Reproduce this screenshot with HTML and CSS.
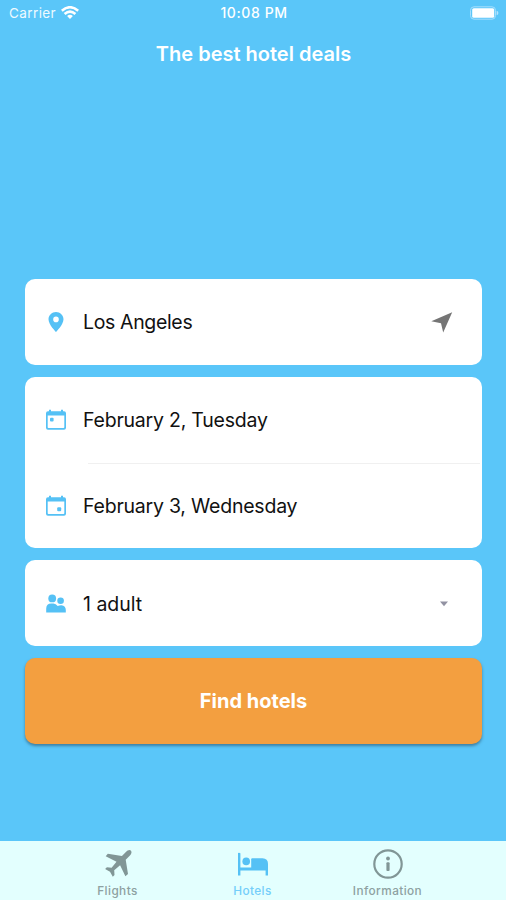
FILE: index.html
```html
<!DOCTYPE html>
<html lang="en">
<head>
<meta charset="utf-8">
<title>Hotels</title>
<link rel="stylesheet" href="styles.css">
</head>
<body>
<div class="app">
  <header class="status">
    <div class="carrier"><span class="carrier-name">Carrier</span>
      <svg class="wifi" viewBox="0 0 18 13"><g fill="none" stroke="#fff" stroke-width="2.6"><path d="M.8 4.7Q9-2.2 17.2 4.7"/><path d="M3.6 8Q9 3.2 14.4 8"/></g><path d="M6.1 10Q9 7.5 11.9 10L9 13Z" fill="#fff"/></svg>
    </div>
    <span class="clock">10:08 PM</span>
    <svg class="battery" viewBox="0 0 30 14"><rect x="1.5" y=".8" width="25" height="12.4" rx="3.5" fill="none" stroke="#a5defd"/><rect x="3.2" y="2.2" width="22" height="9.6" rx="1.6" fill="#fff"/><path d="M27.6 4.7Q29.4 5.3 29.4 7T27.6 9.3Z" fill="#b5e3fd"/></svg>
  </header>
  <h1 class="title">The best hotel deals</h1>
  <main class="form">
    <section class="card">
      <div class="row">
        <svg class="icon" viewBox="0 0 24 24"><path fill="#55c1f5" fill-rule="evenodd" d="M12 2C7.8 2 4.5 5.3 4.5 9.3C4.5 14.7 12 22 12 22S19.5 14.7 19.5 9.3C19.5 5.3 16.2 2 12 2ZM12 6.6A2.8 2.8 0 1 1 12 12.2A2.8 2.8 0 0 1 12 6.6Z"/></svg>
        <span class="label city">Los Angeles</span>
        <svg class="locate" viewBox="0 0 22 21"><path fill="#757575" d="M21.2.3L.3 9.2L10 11.2L12.2 20.6Z"/></svg>
      </div>
    </section>
    <section class="card">
      <div class="row">
        <svg class="icon" viewBox="0 0 24 24"><path fill="#55c1f5" fill-rule="evenodd" d="M5 1.8H7V3.3H17V1.8H19V3.3H20Q22 3.3 22 5.3V19.7Q22 21.7 20 21.7H4Q2 21.7 2 19.7V5.3Q2 3.3 4 3.3H5ZM3.7 7.6V19.2Q3.7 20 4.5 20H19.5Q20.3 20 20.3 19.2V7.6Z"/><rect x="6" y="9.7" width="3.6" height="3.8" rx="1" fill="#55c1f5"/></svg>
        <span class="label">February 2, Tuesday</span>
      </div>
      <div class="divider"></div>
      <div class="row last">
        <svg class="icon" viewBox="0 0 24 24"><path fill="#55c1f5" fill-rule="evenodd" d="M5 1.8H7V3.3H17V1.8H19V3.3H20Q22 3.3 22 5.3V19.7Q22 21.7 20 21.7H4Q2 21.7 2 19.7V5.3Q2 3.3 4 3.3H5ZM3.7 7.6V19.2Q3.7 20 4.5 20H19.5Q20.3 20 20.3 19.2V7.6Z"/><rect x="13.2" y="13.2" width="4" height="4" rx="1" fill="#55c1f5"/></svg>
        <span class="label">February 3, Wednesday</span>
      </div>
    </section>
    <section class="card">
      <div class="row guests-row">
        <svg class="icon" viewBox="0 0 24 24"><g fill="#55c1f5"><circle cx="8.2" cy="6.4" r="3.9"/><circle cx="16.6" cy="8.7" r="3.3"/><path d="M2.2 20.4V16.5Q2.4 11.6 7.2 11.6H9.5Q11.8 11.8 13.7 14.1Q15.4 13.1 17.5 13.2Q21.8 14 21.8 18V20.4Z"/></g></svg>
        <span class="label guests">1 adult</span>
        <svg class="caret" viewBox="0 0 8 6"><path d="M0 .5H8L4 5.2Z" fill="#9292a2"/></svg>
      </div>
    </section>
    <button class="find">Find hotels</button>
  </main>
  <nav class="tabs">
    <a class="tab"><svg class="tab-icon" viewBox="0 0 30 30"><path fill="#819696" d="M28 1.7C29.3 3 28 5.4 26.7 6.8L22.7 10.8L25 25.1L22.4 27.2L17.1 16.3L11.2 21.2L11.5 25.9L9.8 27.7L7 22.7L2.1 19.9L3.9 18.2L8.6 18.7L13.5 12.7L2.7 7.3L4.8 4.8L18.9 7L22.9 3C24.3 1.6 26.7.3 28 1.7Z"/></svg><span>Flights</span></a>
    <a class="tab active"><svg class="tab-icon" viewBox="0 0 30 30"><g fill="#55c1f5"><path d="M0 4.1Q1.2 3.4 2.4 4.3V18.5H30V26.5H27.6V21.5H2.4V26.5H0Z"/><circle cx="8.2" cy="12.4" r="3.8"/><path d="M13.2 19V10.2Q13.2 9.2 14.2 9.2H24.5Q30 9.4 30 14.7V19Z"/></g></svg><span>Hotels</span></a>
    <a class="tab"><svg class="tab-icon" viewBox="0 0 30 30"><circle cx="15" cy="15" r="13.7" fill="none" stroke="#819696" stroke-width="2.2"/><circle cx="15" cy="9.5" r="1.9" fill="#819696"/><rect x="13.4" y="13.3" width="3.2" height="8.8" rx="1" fill="#819696"/></svg><span>Information</span></a>
  </nav>
</div>
</body>
</html>
```

FILE: styles.css
```css
* { box-sizing: border-box; }
body { margin: 0; font-family: Inter, "Liberation Sans", sans-serif; }
.app { width: 506px; height: 900px; background: #5ac6f9; display: flex; flex-direction: column; overflow: hidden; }
.status { height: 26px; padding: 0 7px 0 9px; display: grid; grid-template-columns: 1fr auto 1fr; align-items: center; color: #fff; font-size: 13px; }
.carrier { display: flex; align-items: center; gap: 5px; }
.carrier-name { color: #eefaff; font-size: 13.5px; letter-spacing: .4px; }
.wifi { width: 18px; height: 13px; margin-top: -1px; }
.clock { font-size: 14px; line-height: 16px; font-weight: 500; letter-spacing: .6px; }
.battery { width: 30px; height: 14px; justify-self: end; }
.title { margin: 14px 0 0 1px; height: 28px; line-height: 28px; text-align: center; color: #fff; font-size: 20px; font-weight: 600; }
.form { margin: 211px 24px 0 25px; display: flex; flex-direction: column; gap: 12px; }
.card { background: #fff; border-radius: 10px; }
.row { height: 86px; padding: 0 29px 0 19px; display: flex; align-items: center; }
.icon { width: 24px; height: 24px; margin-right: 15px; }
.label { flex: 1; font-size: 19.5px; line-height: 28px; letter-spacing: -.22px; color: #111; white-space: nowrap; }
.city { letter-spacing: -.35px; }
.guests { letter-spacing: 0; }
.guests-row { padding-top: 1px; }
.locate { width: 22px; height: 21px; }
.caret { width: 8px; height: 6px; margin-right: 5px; }
.divider { height: 1px; margin: 0 2px 0 63px; background: #f0f0f0; }
.last { height: 84px; }
.find { height: 86px; padding: 0; border: 0; border-radius: 10px; background: #f39f40; color: #fff; font: 700 20px/28px Inter, "Liberation Sans", sans-serif; box-shadow: 0 2px 3px rgba(40, 70, 90, .55); }
.tabs { margin-top: auto; height: 59px; padding: 0 51px 0 50px; background: #e3fffe; display: grid; grid-template-columns: repeat(3, 1fr); }
.tab { display: flex; flex-direction: column; align-items: center; color: #8ea1a1; font-size: 11.8px; line-height: 14px; letter-spacing: .42px; font-weight: 500; padding-top: 8px; gap: 5px; }
.tab-icon { width: 30px; height: 30px; }
.tab.active { color: #74cefa; }
```
